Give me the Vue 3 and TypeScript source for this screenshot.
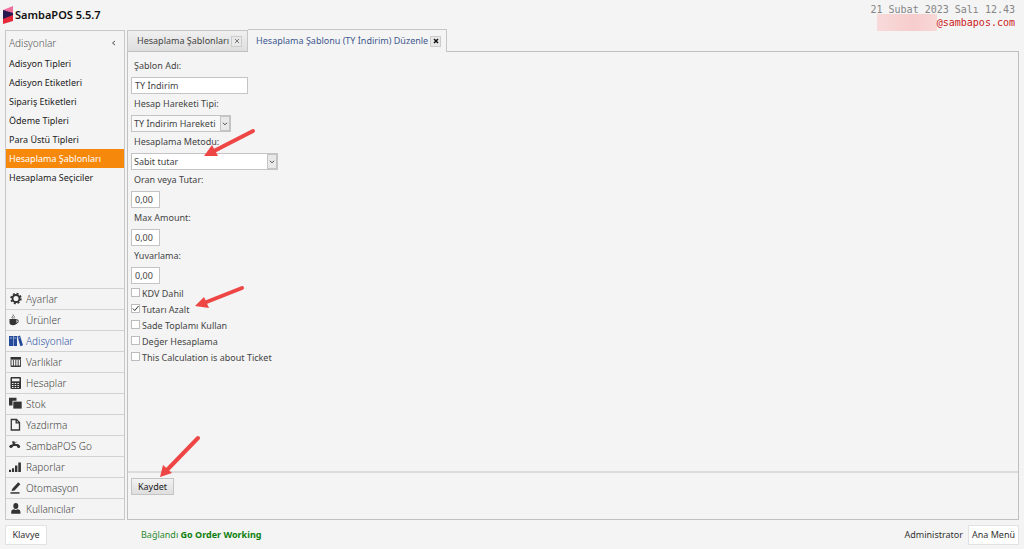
<script setup lang="ts">
import { ref } from 'vue'

interface NavItem { label: string; icon: string }

const menu: string[] = [
  'Adisyon Tipleri', 'Adisyon Etiketleri', 'Sipariş Etiketleri', 'Ödeme Tipleri',
  'Para Üstü Tipleri', 'Hesaplama Şablonları', 'Hesaplama Seçiciler',
]
const activeMenu = ref('Hesaplama Şablonları')

const sections: NavItem[] = [
  { label: 'Ayarlar', icon: 'gear' },
  { label: 'Ürünler', icon: 'cup' },
  { label: 'Adisyonlar', icon: 'books' },
  { label: 'Varlıklar', icon: 'table' },
  { label: 'Hesaplar', icon: 'calc' },
  { label: 'Stok', icon: 'boxes' },
  { label: 'Yazdırma', icon: 'page' },
  { label: 'SambaPOS Go', icon: 'go' },
  { label: 'Raporlar', icon: 'bars' },
  { label: 'Otomasyon', icon: 'pen' },
  { label: 'Kullanıcılar', icon: 'user' },
]
const activeSection = ref('Adisyonlar')

const name = ref('TY İndirim')
const accountType = ref('TY İndirim Hareketi')
const method = ref('Sabit tutar')
const amounts = ref([
  { id: 'amount', label: 'Oran veya Tutar:', value: '0,00' },
  { id: 'max', label: 'Max Amount:', value: '0,00' },
  { id: 'rounding', label: 'Yuvarlama:', value: '0,00' },
])
const options = ref([
  { label: 'KDV Dahil', checked: false },
  { label: 'Tutarı Azalt', checked: true },
  { label: 'Sade Toplamı Kullan', checked: false },
  { label: 'Değer Hesaplama', checked: false },
  { label: 'This Calculation is about Ticket', checked: false },
])
</script>

<template>
  <div class="app">
    <header class="top">
      <div class="brand">
        <svg class="logo" viewBox="0 0 10 18" aria-hidden="true">
          <path d="M0 4 10 0V8L0 9Z" fill="#ee6f9c" />
          <path d="M0 10 10 7V15L0 18Z" fill="#e5283a" />
          <path d="M0 4 10 7V9L0 13Z" fill="#27184f" />
        </svg>
        <h1>SambaPOS 5.5.7</h1>
      </div>
      <div class="status">
        <div>21 Subat 2023 Salı 12.43</div>
        <div class="mail"><span class="redacted"></span>@sambapos.com</div>
      </div>
    </header>

    <div class="body">
      <aside class="side">
        <div class="side-head">
          <span>Adisyonlar</span>
          <button class="collapse" aria-label="Daralt">
            <svg viewBox="0 0 5 6"><path d="M4 1 1.500 3 4 5" /></svg>
          </button>
        </div>
        <nav class="menu">
          <a v-for="m in menu" :key="m" href="#" :class="{ active: m === activeMenu }" @click.prevent="activeMenu = m">{{ m }}</a>
        </nav>
        <nav class="sections">
          <a v-for="s in sections" :key="s.label" href="#" :class="{ active: s.label === activeSection }" @click.prevent="activeSection = s.label">
            <svg class="icon" viewBox="0 0 14 14" aria-hidden="true">
              <g v-if="s.icon === 'gear'" fill="none" stroke="currentColor">
                <circle cx="7" cy="6.500" r="3.500" stroke-width="1.900" />
                <circle cx="7" cy="6.500" r="4.900" stroke-width="1.600" stroke-dasharray="2 1.848" />
              </g>
              <g v-else-if="s.icon === 'cup'">
                <path d="M.5 6H7.500V9.500Q7.500 12.300 4 12.300T.5 9.500Z" />
                <path d="M7.500 6.700Q9.600 6.500 9.200 8.500T7 10.500" fill="none" stroke="currentColor" />
                <path d="M3.500 5.500Q2.500 4.500 3.700 3.400T4 1.500M5.200 5.500Q4.600 4.500 5.500 3.500" fill="none" stroke="currentColor" stroke-width=".8" />
              </g>
              <g v-else-if="s.icon === 'books'">
                <path d="M0 2H4V12H0ZM4.500 2H8V12H4.500ZM8.400 2.400 11 1.500 14 11.200 11.400 12.200Z" />
                <path d="M.8 4H3.200M5.200 4H7.300M9.400 4.200 11 3.700" stroke="#f4f4f4" stroke-width=".6" />
              </g>
              <g v-else-if="s.icon === 'table'">
                <path d="M1.500 2H12V4.700H1.500Z" />
                <path d="M2 5V11.500H11.500V5M4.400 5V11.500M6.800 5V11.500M9.200 5V11.500M2 11H11.500" fill="none" stroke="currentColor" stroke-width=".9" />
              </g>
              <g v-else-if="s.icon === 'calc'">
                <path d="M2.500 1H11Q12 1 12 2V12Q12 13 11 13H2.500Q1.500 13 1.500 12V2Q1.500 1 2.500 1Z" />
                <path d="M3 2.500H10.500V5.300H3Z" fill="#f4f4f4" />
                <path d="M3 7.500H10.500M3 9.500H10.500M3 11.500H10.500" stroke="#f4f4f4" stroke-width="1" stroke-dasharray="1.500 1.200" />
              </g>
              <g v-else-if="s.icon === 'boxes'">
                <path d="M0 .8H7.500V3.800H3.500V8.400H0Z" />
                <path d="M4.300 4.600H12.700V11.600H4.300Z" />
              </g>
              <path v-else-if="s.icon === 'page'" d="M2.300 1.500H7.500L10.500 4.500V12H2.300ZM7.200 1.700V4.900H10.300" fill="none" stroke="currentColor" stroke-width="1.300" />
              <g v-else-if="s.icon === 'go'">
                <path d="M3.300 2.300H5.500L6 4.700 9.600 5.200 11 7.800H8.600L7.500 7H4.500L3.500 8H.3Q.4 5.800 3.300 5.600L4 4.200H3.300Z" />
                <circle cx="2" cy="7.500" r="1.500" />
                <circle cx="9.600" cy="7.500" r="1.500" />
                <path d="M6.500 3.800 7.400 2.800" stroke="currentColor" />
              </g>
              <path v-else-if="s.icon === 'bars'" d="M0 9.800H2.100V12H0ZM3 8.300H5.100V12H3ZM6 5.500H8.400V12H6ZM9.300 2.500H11.900V12H9.300Z" />
              <g v-else-if="s.icon === 'pen'">
                <path d="M9.200 1.300 11.300 3.300 5.600 9.400 2.500 10 3.500 7.400Z" />
                <path d="M1.500 11.200H10.500V12.700H1.500Z" />
              </g>
              <g v-else>
                <ellipse cx="6.800" cy="4" rx="2.500" ry="3" />
                <path d="M2.200 11.800V9.800Q2.200 7.500 4.800 7.300L6.800 8 8.800 7.300Q11.400 7.500 11.400 9.800V11.800Z" />
              </g>
            </svg>
            <span>{{ s.label }}</span>
          </a>
        </nav>
      </aside>

      <main class="main">
        <div class="tabs">
          <div class="tab">
            <span>Hesaplama Şablonları</span>
            <button aria-label="Sekmeyi kapat"><svg viewBox="0 0 6 6"><path d="M1 1 5 5M5 1 1 5" /></svg></button>
          </div>
          <div class="tab current">
            <span>Hesaplama Şablonu (TY İndirim) Düzenle</span>
            <button aria-label="Sekmeyi kapat"><svg viewBox="0 0 6 6"><path d="M1 1 5 5M5 1 1 5" /></svg></button>
          </div>
        </div>

        <form class="panel" @submit.prevent>
          <div class="fields">
            <label for="name">Şablon Adı:</label>
            <input id="name" v-model="name" class="name" type="text">

            <label for="type">Hesap Hareketi Tipi:</label>
            <div class="combo combo-type">
              <select id="type" v-model="accountType"><option>TY İndirim Hareketi</option></select>
              <span class="drop"><svg viewBox="0 0 6 4"><path d="M1 .8 3 2.800 5 .8" /></svg></span>
            </div>

            <label for="method">Hesaplama Metodu:</label>
            <div class="combo combo-method">
              <select id="method" v-model="method"><option>Sabit tutar</option></select>
              <span class="drop"><svg viewBox="0 0 6 4"><path d="M1 .8 3 2.800 5 .8" /></svg></span>
            </div>

            <template v-for="a in amounts" :key="a.id">
              <label :for="a.id">{{ a.label }}</label>
              <input :id="a.id" v-model="a.value" class="number" type="text">
            </template>

            <div class="checks">
              <label v-for="o in options" :key="o.label" class="check">
                <input v-model="o.checked" type="checkbox">
                <span>{{ o.label }}</span>
              </label>
            </div>
          </div>
          <div class="actions">
            <button type="submit">Kaydet</button>
          </div>
        </form>
      </main>
    </div>

    <footer class="bottom">
      <button>Klavye</button>
      <p class="connection">Bağlandı <b>Go Order Working</b></p>
      <span class="user">Administrator</span>
      <button>Ana Menü</button>
    </footer>

    <svg class="arrows" width="300" height="549" aria-hidden="true">
      <g stroke="#ee4545" stroke-width="4" stroke-linecap="round">
        <path d="M253 131 214 151" />
        <path d="M242 288 204 303" />
        <path d="M198 438 167 470" />
      </g>
      <g fill="#ee4545">
        <path d="M204 156 212 145 218 156Z" />
        <path d="M195 306 204 297 209 308Z" />
        <path d="M160 477 163 465 172 473Z" />
      </g>
    </svg>
  </div>
</template>

<style>
html, body { margin: 0; background: #f4f4f4; }
</style>

<style scoped>
* { box-sizing: border-box; }
.app {
  position: relative;
  display: flex;
  flex-direction: column;
  min-height: 100vh;
  padding: 0 5px;
  background: #f4f4f4;
  color: #444;
  font: 9px/16px "Noto Sans", "Open Sans", sans-serif;
}
button, input, select { font: inherit; color: inherit; margin: 0; }
a { color: inherit; text-decoration: none; }

.top { display: flex; justify-content: space-between; height: 30px; }
.brand { display: flex; align-items: center; gap: 2px; margin-left: -2px; }
.logo { width: 10px; height: 18px; }
h1 { margin: 0; font-size: 11px; line-height: 18px; font-weight: 600; color: #111; }
.status { padding: 3px 4px 0 0; font: 10px/13px "DejaVu Sans Mono", monospace; color: #858585; text-align: right; }
.mail { display: flex; justify-content: flex-end; height: 13px; color: #cc2222; }
.redacted { width: 60px; height: 17px; margin-top: -2px; background: linear-gradient(90deg, #f8dada, #f7cccc 60%, #f8d8d8); }

.body { flex: 1; display: flex; gap: 2px; }
.side { display: flex; flex-direction: column; width: 120px; border: 1px solid #c8c8c8; }
.side-head { display: flex; align-items: center; justify-content: space-between; height: 23px; padding: 0 8px 0 3px; font-size: 10px; font-weight: 300; color: #555; }
.collapse { display: flex; padding: 0; border: 0; background: none; }
.collapse svg { width: 5px; height: 6px; fill: none; stroke: #555; }
.menu { flex: 1; }
.menu a { display: block; height: 19px; padding-left: 3px; line-height: 19px; color: #222; }
.menu a.active { background: #f6890c; color: #fff; }
.sections a { display: flex; align-items: center; gap: 3px; height: 21px; padding-left: 3px; border-top: 1px solid #d2d2d2; font-size: 10px; font-weight: 300; color: #444; }
.sections .icon { width: 14px; height: 14px; color: #333; fill: currentColor; }
.sections a.active { color: #2c4fa5; }
.sections .active .icon { color: #244a9b; }

.main { flex: 1; display: flex; flex-direction: column; min-width: 0; }
.tabs { display: flex; align-items: flex-end; height: 22px; margin-top: -1px; }
.tab { display: flex; align-items: center; gap: 2px; height: 21px; padding: 0 5px 0 9px; border: 1px solid #c6c6c6; border-bottom: 0; background: linear-gradient(#f0f0f0, #dedede); white-space: nowrap; }
.tab.current { z-index: 1; height: 23px; margin-bottom: -1px; padding-left: 8px; border-left: 0; background: #f4f4f4; color: #41598f; }
.tab button { display: flex; align-items: center; justify-content: center; width: 11px; height: 11px; padding: 0; border: 1px solid #ccc; background: #e8e8e8; }
.tab svg { flex: none; width: 6px; height: 6px; stroke: #777; stroke-width: 1; }
.tab.current svg { stroke: #111; stroke-width: 1.5; }

.panel { flex: 1; display: flex; flex-direction: column; border: 1px solid #c0c0c0; }
.fields { flex: 1; padding: 4px 3px; }
.fields > label { display: block; height: 21px; padding-left: 3px; line-height: 20px; }
.fields > input, .combo { display: block; height: 17px; border: 1px solid #c4c4c4; background: #fff; padding: 0 3px; }
.name { width: 117px; }
.number { width: 29px; }
.combo { display: flex; align-items: center; padding: 0; }
.combo-type { width: 100px; background: #f8f8f8; }
.combo-method { width: 147px; }
.combo select { flex: 1; min-width: 0; height: 15px; padding: 0 0 0 2px; border: 0; background: none; appearance: none; line-height: 15px; }
.drop { display: flex; align-items: center; justify-content: center; width: 10px; height: 15px; border: 1px solid #c4c4c4; background: #e9e9e9; pointer-events: none; }
.drop svg { flex: none; width: 6px; height: 4px; fill: none; stroke: #444; }

.checks { padding-top: 2px; }
.check { display: flex; gap: 2px; height: 16px; line-height: 16px; }
.check input { appearance: none; width: 9px; height: 9px; margin-top: 2px; border: 1px solid #bcbcbc; background: #fff; }
.check input:checked { background: #fff url("data:image/svg+xml,%3Csvg xmlns='http://www.w3.org/2000/svg' viewBox='0 0 7 7'%3E%3Cpath d='M.8 3.500 2.800 5.500 6.500 1' fill='none' stroke='%23333'/%3E%3C/svg%3E"); }
.actions { height: 48px; padding: 5px 3px; border-top: 2px solid #dcdcdc; }
.actions button { width: 43px; height: 17px; padding: 0; border: 1px solid #c4c4c4; background: linear-gradient(#f2f2f2, #dedede); line-height: 15px; color: #222; }

.bottom { display: flex; align-items: center; height: 29px; color: #333; }
.bottom button { height: 20px; padding: 0; border: 1px solid #e2e2e2; background: #fff; }
.bottom button:first-child { width: 42px; }
.bottom button:last-child { width: 51px; }
.connection { flex: 1; margin: 0 0 0 94px; color: #2c8a2c; }
.connection b { font-weight: 700; color: #0c800c; }
.user { margin-right: 5px; }
.arrows { position: absolute; top: 0; left: 0; pointer-events: none; }
</style>
